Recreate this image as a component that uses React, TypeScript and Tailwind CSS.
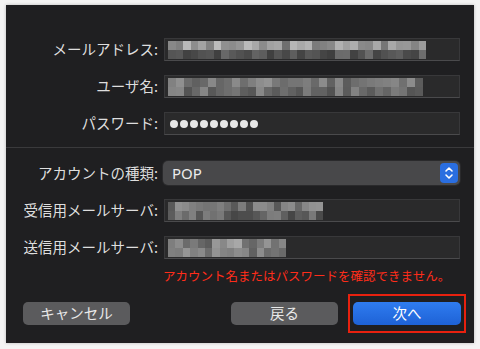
import React from "react";

const font = { fontFamily: '"Noto Sans CJK JP", "Noto Sans", sans-serif' };

const Blur = ({ w, shades }: { w: number; shades: string[][] }) => (
  <div className="flex flex-col h-[18px] overflow-hidden blur-[0.6px]" style={{ width: w }}>
    {shades.map((row, i) => (
      <div key={i} className="flex flex-1">
        {row.map((c, j) => (
          <div key={j} className="flex-1" style={{ backgroundColor: c }} />
        ))}
      </div>
    ))}
  </div>
);

const mk = (n: number, seed: number, base: number, spread: number) => {
  const out: string[] = [];
  let s = seed;
  for (let i = 0; i < n; i++) {
    s = (s * 9301 + 49297) % 233280;
    const v = Math.round(base + (s / 233280) * spread);
    out.push(`rgb(${v},${v},${v})`);
  }
  return out;
};

const Field = ({ children }: { children?: React.ReactNode }) => (
  <div className="h-[23px] bg-[#2a2a2b] border border-[#38383a] border-b-[#4a4a4c] flex items-center pl-[3px] overflow-hidden">
    {children}
  </div>
);

const Row = ({ label, children }: { label: string; children: React.ReactNode }) => (
  <div className="flex items-center">
    <div className="w-[158px] text-right text-[14.5px] text-[#dedede] pr-[6px] leading-none whitespace-nowrap">{label}</div>
    <div className="flex-1">{children}</div>
  </div>
);

export default function App() {
  return (
    <div className="w-[480px] h-[349px] bg-[#f4f4f4] pt-[5px] px-[6px] pb-[6px]" style={font}>
      <div className="w-[468px] h-[338px] bg-[#1f1f21] shadow-[0_0_3px_rgba(0,0,0,0.25)] pr-[14px] pt-[33px] flex flex-col">
        <div className="flex flex-col gap-[14px]">
          <Row label="メールアドレス:">
            <Field>
              <Blur w={258} shades={[mk(34, 3, 110, 80), mk(34, 7, 60, 50)]} />
            </Field>
          </Row>
          <Row label="ユーザ名:">
            <Field>
              <Blur w={255} shades={[mk(32, 11, 90, 60), mk(32, 17, 80, 60)]} />
            </Field>
          </Row>
          <Row label="パスワード:">
            <Field>
              <div className="flex gap-[2px] pl-[2px]">
                {Array.from({ length: 9 }).map((_, i) => (
                  <div key={i} className="w-[8px] h-[8px] rounded-full bg-[#e6e6e6]" />
                ))}
              </div>
            </Field>
          </Row>
        </div>
        <div className="h-[1px] bg-[#3a3a3c] mt-[12px] mr-[-14px]" />
        <div className="flex flex-col gap-[14px] mt-[13px]">
          <Row label="アカウントの種類:">
            <div className="h-[24px] ml-[-1px] bg-[#48484a] rounded-[5px] flex items-center justify-between pl-[9px] pr-[2px] shadow-[0_0_0_1px_#2a2a2c]">
              <span className="text-[15px] text-[#ececec] leading-none" style={{ fontFamily: '"Noto Sans", sans-serif' }}>POP</span>
              <div className="w-[18px] h-[20px] rounded-[4px] bg-[#2a6ee0] flex items-center justify-center">
                <svg width="10" height="14" viewBox="0 0 10 14" fill="none" stroke="white" strokeWidth="1.6" strokeLinecap="round" strokeLinejoin="round">
                  <path d="M2 5 L5 2 L8 5" />
                  <path d="M2 9 L5 12 L8 9" />
                </svg>
              </div>
            </div>
          </Row>
          <Row label="受信用メールサーバ:">
            <Field>
              <Blur w={155} shades={[mk(22, 23, 80, 70), mk(22, 29, 70, 60)]} />
            </Field>
          </Row>
          <Row label="送信用メールサーバ:">
            <Field>
              <Blur w={118} shades={[mk(16, 31, 90, 80), mk(16, 37, 80, 70)]} />
            </Field>
          </Row>
        </div>
        <div className="mt-[11px] pl-[157px] text-[12.5px] text-[#ff2d1a] leading-none whitespace-nowrap">
          アカウント名またはパスワードを確認できません。
        </div>
        <div className="flex items-center mt-[11px] pl-[17px]">
          <button className="w-[107px] h-[23px] rounded-[5px] bg-[#5b5b5d] text-[14.5px] text-[#e8e8e8] leading-none">キャンセル</button>
          <div className="flex-1" />
          <button className="w-[107px] h-[23px] rounded-[5px] bg-[#5b5b5d] text-[14.5px] text-[#e8e8e8] leading-none">戻る</button>
          <div className="ml-[10px] w-[118px] h-[39px] border-2 border-[#e8210f] flex items-center justify-center mr-[-6px]">
            <button className="w-[108px] h-[23px] rounded-[5px] bg-gradient-to-b from-[#2f7cf0] to-[#1e62d6] text-[14.5px] text-white leading-none">次へ</button>
          </div>
        </div>
      </div>
    </div>
  );
}
